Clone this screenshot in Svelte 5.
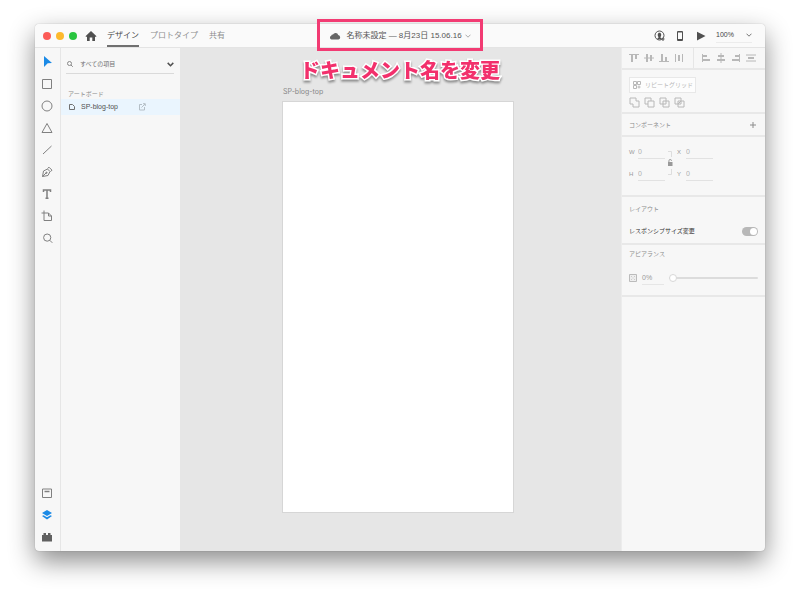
<script>

    // Header tabs
    const tabs = ["デザイン", "プロトタイプ", "共有"];

    // Drawing tools
    const tools = [
        { name: "選択", fill: true, d: "M4 1 L12 8 L7.7 8.3 L4 12 Z" },
        { name: "長方形", d: "M2.5 2.5 H11.5 V11.5 H2.5 Z" },
        { name: "楕円形", d: "M7 2 A5 5 0 1 1 7 12 A5 5 0 1 1 7 2 Z" },
        { name: "多角形", d: "M7 2.5 L12 11.5 H2 Z" },
        { name: "線", d: "M3 11 L11.5 3" },
        { name: "ペン", d: "M2.5 11.5 L3.5 6 L7.5 4 L10 6.5 L8 10.5 Z M2.5 11.5 L6 8 M7.5 3.5 L9 2.2 L12 5.2 L10.5 6.5 M6 7.2 h1 v1 h-1 Z" },
        { name: "テキスト", bold: true, d: "M3.5 5 V3 H10.5 V5 M7 3 V11.5 M5.5 11.2 H8.5" },
        { name: "アートボード", d: "M4 1.5 V11.5 H11.5 V7 L8.5 4 H1.5 M8.5 4 V7 H11.5" },
        { name: "ズーム", d: "M7.2 3 A3.6 3.6 0 1 1 7.2 10.2 A3.6 3.6 0 1 1 7.2 3 Z M9.8 9.3 L12.3 11.8" }
    ];

    // Alignment icons, bars first and guide line last
    const vertical = [
        { name: "上揃え", bars: "M2 2 h2 v7 h-2 Z M6 2 h2 v4 h-2 Z", line: "M0 1.5 H10" },
        { name: "中央揃え (垂直方向)", bars: "M2 1 h2 v8 h-2 Z M6 2 h2 v6 h-2 Z", line: "M0 5 H10" },
        { name: "下揃え", bars: "M2 1 h2 v7 h-2 Z M6 4 h2 v4 h-2 Z", line: "M0 8.5 H10" },
        { name: "水平方向に分布", bars: "M4 2 h2 v6 h-2 Z", line: "M1.5 1 V9 M8.5 1 V9" }
    ];

    const horizontal = [
        { name: "左揃え", bars: "M2 2 h4 v2 h-4 Z M2 6 h7 v2 h-7 Z", line: "M1.5 1 V9" },
        { name: "中央揃え (水平方向)", bars: "M2 2 h6 v2 h-6 Z M1 6 h8 v2 h-8 Z", line: "M5 0 V10" },
        { name: "右揃え", bars: "M4 2 h4 v2 h-4 Z M1 6 h7 v2 h-7 Z", line: "M8.5 1 V9" },
        { name: "垂直方向に分布", bars: "M2 4 h6 v2 h-6 Z", line: "M0 2 H10 M0 8 H10" }
    ];

    // Boolean operations
    const booleans = [
        { name: "合体", d: "M1 1 H7 V4 H10 V10 H4 V7 H1 Z" },
        { name: "前面オブジェクトで型抜き", d: "M7 4 V1 H1 V7 H4 M4 4 H10 V10 H4 Z" },
        { name: "交差", d: "M7 7 V1 H1 V7 Z M4 4 H10 V10 H4 Z" },
        { name: "中マド", d: "M1 1 H7 V7 H1 Z M4 4 H10 V10 H4 Z M4 7 L7 4" }
    ];

    let tab = $state("デザイン");
    let tool = $state("選択");
    let query = $state("すべての項目");
    let zoom = $state("100%");
    let responsive = $state(true);
    let opacity = $state(0);
    let size = $state({ W: 0, X: 0, H: 0, Y: 0 });

</script>

{#snippet alignIcon(item)}
    <button class="align" aria-label={item.name}>
        <svg width="10" height="10" viewBox="0 0 10 10">
            <path class="bars" d={item.bars} />
            <path d={item.line} />
        </svg>
    </button>
{/snippet}

{#snippet field(key)}
    <label class="field">
        <span>{key}</span>
        <input type="text" bind:value={size[key]} />
    </label>
{/snippet}

<main class="page">
    <div class="window">

        <!-- Title bar -->
        <header class="header">
            <div class="left">
                <div class="lights">
                    <button class="light close" aria-label="閉じる"></button>
                    <button class="light minimize" aria-label="しまう"></button>
                    <button class="light maximize" aria-label="拡大"></button>
                </div>
                <button class="home" aria-label="ホーム">
                    <svg width="12" height="12" viewBox="0 0 12 12">
                        <path d="M6 1 L11.5 6.2 L10.8 7 L10 6.5 V11 H7.3 V7.5 H4.7 V11 H2 V6.5 L1.2 7 L0.5 6.2 Z" />
                    </svg>
                </button>
                <nav class="tabs">
                    {#each tabs as name}
                        <button class="tab" class:active={tab === name} onclick={() => tab = name}>{name}</button>
                    {/each}
                </nav>
            </div>

            <!-- Document name -->
            <div class="document">
                <button class="name">
                    <svg width="12" height="8" viewBox="0 0 12 8">
                        <path d="M2.5 7.5 A2 2 0 0 1 2.2 3.7 A1.7 1.7 0 0 1 4 2.5 A2.8 2.8 0 0 1 9.2 3 A2.3 2.3 0 0 1 9.5 7.5 Z" />
                    </svg>
                    <span>名称未設定 — 8月23日 15.06.16</span>
                    <svg class="chevron" width="6" height="4" viewBox="0 0 6 4"><path d="M0.5 0.7 L3 3.2 L5.5 0.7" /></svg>
                </button>
                <div class="highlight"></div>
                <strong class="note">ドキュメント名を変更</strong>
            </div>

            <div class="right">
                <button aria-label="共有相手を招待">
                    <svg width="12" height="12" viewBox="0 0 12 12">
                        <circle class="stroke" cx="5.5" cy="5.5" r="4.5" />
                        <path d="M3.3 9.3 C3.2 8 4.5 7.8 4.6 7.2 C3.2 5.5 3.6 2.8 5.5 2.8 C7.4 2.8 7.8 5.5 6.4 7.2 C6.5 7.8 7.8 8 7.7 9.3 Z M8.5 7.5 h1 v1 h1 v1 h-1 v1.5 h-1 v-1.5 h-1 v-1 h1 Z" />
                    </svg>
                </button>
                <button aria-label="デバイスプレビュー">
                    <svg width="8" height="12" viewBox="0 0 8 12">
                        <path d="M2 1 H6 A1 1 0 0 1 7 2 V10 A1 1 0 0 1 6 11 H2 A1 1 0 0 1 1 10 V2 A1 1 0 0 1 2 1 Z M2 2.5 V9 H6 V2.5 Z" fill-rule="evenodd" />
                    </svg>
                </button>
                <button aria-label="プレビュー">
                    <svg width="12" height="12" viewBox="0 0 12 12"><path d="M3 1.8 L11.5 6 L3 10.5 Z" /></svg>
                </button>
                <label class="zoom">
                    <select aria-label="ズーム" bind:value={zoom}>
                        <option>100%</option>
                        <option>200%</option>
                    </select>
                    <svg class="chevron" width="6" height="4" viewBox="0 0 6 4"><path d="M0.5 0.7 L3 3.2 L5.5 0.7" /></svg>
                </label>
            </div>
        </header>

        <div class="body">

            <!-- Toolbar -->
            <aside class="toolbar">
                {#each tools as item}
                    <button class="tool" class:active={tool === item.name} aria-label={item.name} onclick={() => tool = item.name}>
                        <svg width="14" height="14" viewBox="0 0 14 14">
                            <path class:solid={item.fill} class:bold={item.bold} d={item.d} />
                        </svg>
                    </button>
                {/each}
                <div class="spacer"></div>
                <button class="tool" aria-label="ライブラリ">
                    <svg width="14" height="14" viewBox="0 0 14 14">
                        <path d="M2.5 3 H11.5 V11.5 H2.5 Z" /><path class="bold" d="M4.5 5.5 H9.5" />
                    </svg>
                </button>
                <button class="tool active" aria-label="レイヤー">
                    <svg width="14" height="14" viewBox="0 0 14 14">
                        <path class="solid" d="M7 2 L12 5 L7 8 L2 5 Z M2 8 L3.5 7.2 L7 9.2 L10.5 7.2 L12 8 L7 11.5 Z" />
                    </svg>
                </button>
                <button class="tool" aria-label="プラグイン">
                    <svg width="14" height="14" viewBox="0 0 14 14">
                        <path class="solid" d="M2 5 H3.5 V3 H6 V5 H8 V3 H10.5 V5 H12 V11.5 H2 Z" />
                    </svg>
                </button>
            </aside>

            <!-- Layers -->
            <aside class="layers">
                <label class="search">
                    <svg width="6" height="6" viewBox="0 0 6 6"><path d="M2.5 0.5 A2 2 0 1 1 2.5 4.5 A2 2 0 1 1 2.5 0.5 Z M4 4 L5.8 5.8" /></svg>
                    <input type="text" aria-label="検索" bind:value={query} />
                    <svg class="arrow" width="7" height="5" viewBox="0 0 7 5"><path d="M0.7 0.9 L3.5 3.7 L6.3 0.9" /></svg>
                </label>
                <h2>アートボード</h2>
                <button class="layer">
                    <svg class="board" width="6" height="6" viewBox="0 0 6 6"><path d="M0.5 0.5 H3.5 L5.5 2.5 V5.5 H0.5 Z" /></svg>
                    <span>SP-blog-top</span>
                    <svg width="8" height="8" viewBox="0 0 8 8"><path d="M4 1.5 H1.5 V7 H6.5 V4 M3.5 4.5 L7 1 M5 0.7 H7.3 V3" /></svg>
                </button>
            </aside>

            <!-- Canvas -->
            <section class="canvas">
                <span class="label">SP-blog-top</span>
                <div class="artboard"></div>
            </section>

            <!-- Properties -->
            <aside class="properties">
                <section class="aligns">
                    <div class="group">
                        {#each vertical as item}{@render alignIcon(item)}{/each}
                    </div>
                    <div class="group">
                        {#each horizontal as item}{@render alignIcon(item)}{/each}
                    </div>
                </section>

                <section class="repeat">
                    <button class="grid">
                        <svg width="8" height="8" viewBox="0 0 8 8">
                            <path d="M0.5 0.5 h3 v3 h-3 Z M4.5 0.5 h3 v3 h-3 Z M0.5 4.5 h3 v3 h-3 Z M4.5 6 h3 M6 4.5 v3" />
                        </svg>
                        <span>リピートグリッド</span>
                    </button>
                    <div class="booleans">
                        {#each booleans as item}
                            <button aria-label={item.name}>
                                <svg width="11" height="11" viewBox="0 0 11 11"><path d={item.d} /></svg>
                            </button>
                        {/each}
                    </div>
                </section>

                <section class="component">
                    <h2>コンポーネント</h2>
                    <button aria-label="コンポーネントを追加">
                        <svg width="8" height="8" viewBox="0 0 8 8"><path d="M4 1 V7 M1 4 H7" /></svg>
                    </button>
                </section>

                <section class="transform">
                    <div class="column">
                        {@render field("W")}
                        {@render field("H")}
                    </div>
                    <button class="lock" aria-label="縦横比を固定">
                        <svg width="6" height="26" viewBox="0 0 6 26">
                            <path class="guide" d="M0 1.5 H3.5 V7 M0 24.5 H3.5 V19" />
                            <path class="body-lock" d="M0 12 H4.5 V16 H0 Z" />
                            <path class="shackle" d="M0.9 12 V10.8 A1.3 1.3 0 0 1 3.5 10.8" />
                        </svg>
                    </button>
                    <div class="column">
                        {@render field("X")}
                        {@render field("Y")}
                    </div>
                </section>

                <section class="layout">
                    <h2>レイアウト</h2>
                    <label class="responsive">
                        <span>レスポンシブサイズ変更</span>
                        <input type="checkbox" bind:checked={responsive} />
                    </label>
                </section>

                <section class="appearance">
                    <h2>アピアランス</h2>
                    <div class="opacity">
                        <svg width="8" height="8" viewBox="0 0 8 8">
                            <path class="checker" d="M0.5 0.5 h7 v7 h-7 Z" />
                            <path class="dots" d="M2 2 h1 v1 h-1 Z M5 2 h1 v1 h-1 Z M3.5 3.5 h1 v1 h-1 Z M2 5 h1 v1 h-1 Z M5 5 h1 v1 h-1 Z" />
                        </svg>
                        <output>{opacity}%</output>
                        <input type="range" aria-label="不透明度" min="0" max="100" bind:value={opacity} />
                    </div>
                </section>
            </aside>

        </div>
    </div>
</main>

<style>

    :global(body) {
        margin: 0;
        background: #fff;
    }

    /* Page */
    .page {
        box-sizing: border-box;
        min-height: 100vh;
        padding: 24px 35px 45px;
        display: flex;
        font-family: "Liberation Sans", "Noto Sans CJK JP", sans-serif;
        font-size: 6px;
        line-height: 10px;
        color: #707070;
    }

    .page * {
        box-sizing: border-box;
    }

    button, input, select {
        font: inherit;
        color: inherit;
        background: none;
        border: 0;
        padding: 0;
        margin: 0;
        min-width: 0;
    }

    input:focus, select:focus {
        outline: none;
    }

    button {
        display: flex;
        align-items: center;
        justify-content: center;
    }

    svg {
        display: block;
        flex: none;
    }

    h2 {
        margin: 0;
        font-size: 6px;
        font-weight: 400;
        color: #8c8c8c;
    }

    /* Window */
    .window {
        flex: 1;
        display: flex;
        flex-direction: column;
        border-radius: 4px;
        background: #f7f7f7;
        box-shadow: 0 0 1px rgba(0, 0, 0, .4), 0 10px 26px rgba(0, 0, 0, .46);
    }

    /* Header */
    .header {
        height: 24px;
        display: grid;
        grid-template-columns: 1fr auto 1fr;
        border-bottom: 1px solid #e4e4e4;
        border-radius: 4px 4px 0 0;
        background: #fafafa;
        font-size: 8px;
    }

    .left, .right, .lights, .tabs, .name {
        display: flex;
        align-items: center;
    }

    .left {
        padding-left: 8px;
    }

    .lights {
        gap: 5px;
    }

    .light {
        width: 8px;
        height: 8px;
        border-radius: 50%;
    }

    .close { background: #fc5b57; }
    .minimize { background: #fdb92d; }
    .maximize { background: #29c53f; }

    .home {
        margin-left: 8px;
        fill: #505050;
    }

    .tabs {
        margin-left: 10px;
        gap: 11px;
        height: 100%;
    }

    .tab {
        height: 100%;
        border-bottom: 2px solid transparent;
        border-top: 2px solid transparent;
        color: #8e8e8e;
        white-space: nowrap;
    }

    .tab.active {
        color: #4a4a4a;
        border-bottom-color: #707070;
    }

    /* Document name */
    .document {
        position: relative;
        display: flex;
    }

    .name {
        gap: 5px;
        color: #555;
        fill: #666;
        white-space: nowrap;
    }

    .chevron {
        fill: none;
        stroke: #777;
        stroke-width: 1;
    }

    .name .chevron {
        stroke: #aaa;
        margin-left: -2px;
    }

    /* Annotation over the document name */
    .highlight {
        position: absolute;
        inset: -5px -12px -4px;
        border: 3px solid #f23b73;
        pointer-events: none;
    }

    .note {
        position: absolute;
        top: 32px;
        left: 50%;
        transform: translateX(-50%);
        font-size: 20px;
        line-height: 30px;
        font-weight: 900;
        color: #f2306c;
        white-space: nowrap;
        -webkit-text-stroke: 3px #fff;
        paint-order: stroke fill;
        filter: drop-shadow(0 2px 1px rgba(0, 0, 0, .4));
    }

    /* Header actions */
    .right {
        justify-content: flex-end;
        gap: 10px;
        padding-right: 13px;
        fill: #505050;
    }

    .stroke {
        fill: none;
        stroke: #505050;
    }

    .zoom {
        display: flex;
        align-items: center;
        justify-content: space-between;
        width: 36px;
        height: 14px;
        border-bottom: 1px solid #ececec;
        font-size: 7px;
        color: #444;
    }

    .zoom select {
        appearance: none;
        width: 24px;
    }

    /* Body */
    .body {
        flex: 1;
        display: flex;
    }

    /* Toolbar */
    .toolbar {
        width: 26px;
        padding: 3px 1px 3px 0;
        display: flex;
        flex-direction: column;
        border-right: 1px solid #e6e6e6;
    }

    .tool {
        height: 22px;
        fill: none;
        stroke: #808080;
    }

    .tool.active {
        stroke: #1b8ae6;
    }

    .solid {
        fill: #606060;
        stroke: none;
    }

    .active .solid {
        fill: #1b8ae6;
    }

    .bold {
        stroke-width: 1.5;
    }

    .spacer {
        flex: 1;
    }

    /* Layers */
    .layers {
        width: 119px;
    }

    .search {
        display: flex;
        align-items: center;
        gap: 7px;
        height: 19px;
        margin: 7px 6px 15px 5px;
        padding-left: 1px;
        border-bottom: 1px solid #dadada;
        fill: none;
        stroke: #888;
    }

    .search input {
        flex: 1;
    }

    .arrow {
        stroke: #505050;
        stroke-width: 1.5;
    }

    .layers h2 {
        padding-left: 7px;
    }

    .layer {
        width: 100%;
        height: 16px;
        padding-left: 8px;
        justify-content: flex-start;
        background: #eaf5fe;
        color: #505050;
        font-size: 7px;
        fill: none;
        stroke: #b4bec6;
    }

    .layer span {
        margin: 0 20px 0 6px;
    }

    .board {
        stroke: #707070;
    }

    /* Canvas */
    .canvas {
        flex: 1;
        padding: 39px 107px 38px 102px;
        display: flex;
        flex-direction: column;
        background: #e6e6e6;
    }

    .label {
        margin: 0 0 4px 1px;
        font-family: Inter, sans-serif;
        font-size: 7px;
        color: #888;
    }

    .artboard {
        flex: 1;
        background: #fff;
        border: 1px solid #d6d6d6;
    }

    /* Properties */
    .properties {
        width: 144px;
        border-left: 1px solid #ececec;
    }

    .properties > section {
        border-bottom: 2px solid #e8e8e8;
        padding: 0 7px;
    }

    .properties button {
        fill: none;
        stroke: #b8b8b8;
    }

    .properties .aligns {
        display: flex;
        height: 22px;
        padding: 0;
    }

    .group {
        flex: 1;
        display: flex;
        align-items: center;
        justify-content: center;
        gap: 5px;
        padding-right: 2px;
    }

    .group + .group {
        border-left: 1px solid #e6e6e6;
    }

    .bars {
        fill: #b8b8b8;
        stroke: none;
    }

    .properties .repeat {
        height: 44px;
        padding-top: 7px;
    }

    .grid {
        gap: 4px;
        height: 16px;
        padding: 0 2px 0 3px;
        border: 1px solid #e8e8e8;
        background: #fdfdfd;
        color: #b8b8b8;
    }

    .booleans {
        display: flex;
        gap: 4px;
        margin-top: 4px;
    }

    .properties .component {
        height: 23px;
        display: flex;
        align-items: center;
        justify-content: space-between;
        padding-right: 8px;
    }

    .component button {
        stroke: #8c8c8c;
    }

    .properties .transform {
        display: flex;
        gap: 3px;
        height: 60px;
        padding-top: 7px;
    }

    .column {
        display: flex;
        flex-direction: column;
        gap: 7px;
    }

    .field {
        display: flex;
        align-items: center;
        height: 15px;
        color: #999;
    }

    .field span {
        width: 9px;
    }

    .field input {
        width: 27px;
        height: 15px;
        border-bottom: 1px solid #e2e2e2;
        font-size: 7px;
        color: #b0b0b0;
    }

    .lock {
        height: 37px;
        width: 6px;
    }

    .guide {
        stroke: #ddd;
    }

    .body-lock {
        fill: #999;
        stroke: none;
    }

    .shackle {
        stroke: #999;
    }

    .properties .layout {
        height: 48px;
        padding-top: 7px;
    }

    .responsive {
        display: flex;
        align-items: center;
        justify-content: space-between;
        margin-top: 12px;
        color: #333;
    }

    .responsive input {
        appearance: none;
        display: flex;
        align-items: center;
        width: 16px;
        height: 9px;
        padding: 1px;
        border-radius: 5px;
        background: #b8b8b8;
    }

    .responsive input::before {
        content: "";
        width: 7px;
        height: 7px;
        border-radius: 50%;
        background: #fff;
    }

    .responsive input:checked {
        justify-content: flex-end;
    }

    .properties .appearance {
        height: 52px;
        padding-top: 4px;
    }

    .opacity {
        display: flex;
        align-items: center;
        margin-top: 11px;
    }

    .checker {
        fill: #eee;
        stroke: #bbb;
    }

    .dots {
        fill: #ccc;
    }

    output {
        width: 22px;
        height: 15px;
        margin: 0 5px;
        border-bottom: 1px solid #e6e6e6;
        font-size: 7px;
        line-height: 15px;
        color: #999;
    }

    input[type="range"] {
        appearance: none;
        flex: 1;
        height: 8px;
    }

    input[type="range"]::-webkit-slider-runnable-track {
        height: 2px;
        border-radius: 1px;
        background: #dcdcdc;
    }

    input[type="range"]::-webkit-slider-thumb {
        appearance: none;
        width: 8px;
        height: 8px;
        margin-top: -3px;
        border: 1px solid #d8d8d8;
        border-radius: 50%;
        background: #fff;
    }

</style>
